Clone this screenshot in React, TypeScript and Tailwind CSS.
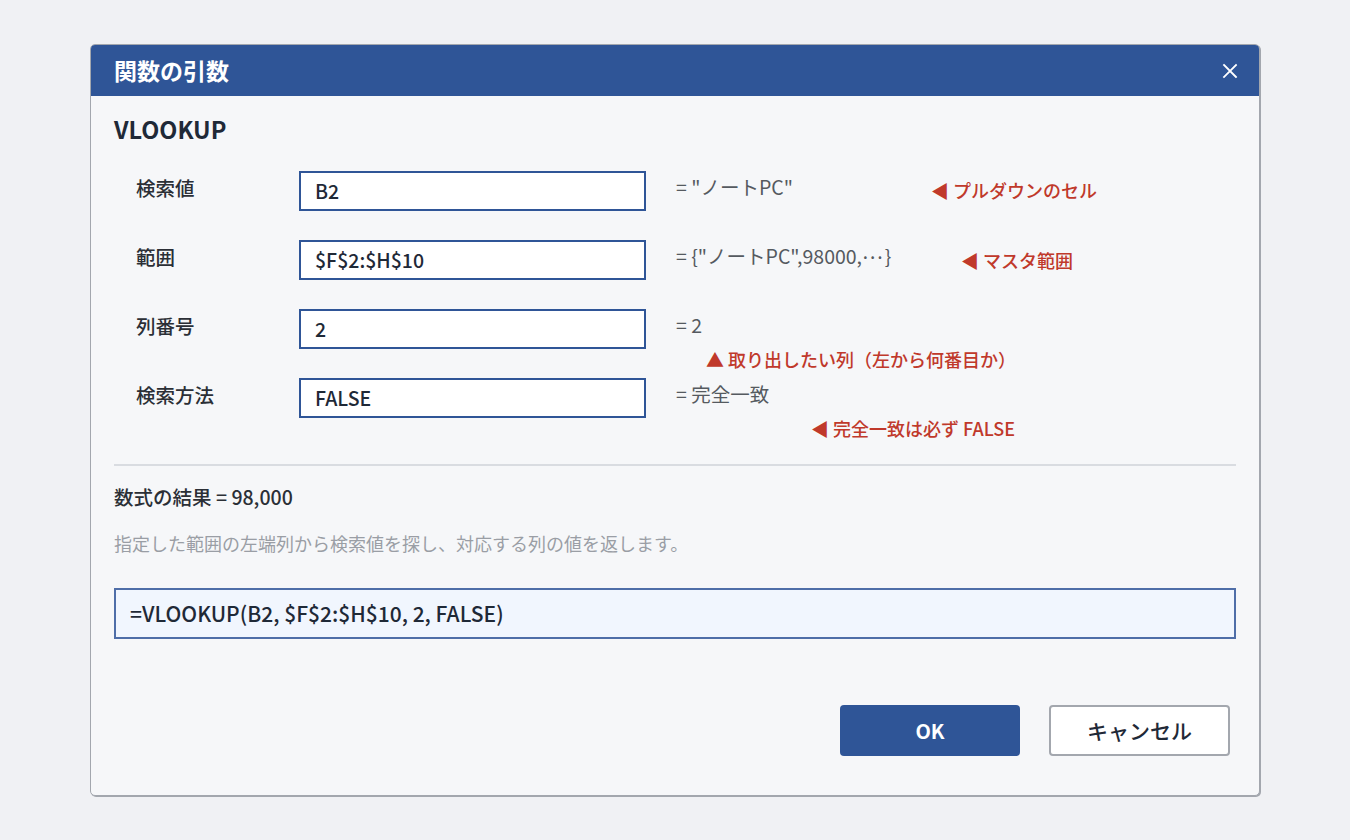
import React from "react";

const font = { fontFamily: '"Noto Sans CJK JP", "Noto Sans", sans-serif' };

type Arg = {
  label: string;
  value: string;
  result: React.ReactNode;
};

const args: Arg[] = [
  { label: "検索値", value: "B2", result: '= "ノートPC"' },
  {
    label: "範囲",
    value: "$F$2:$H$10",
    result: (
      <>
        = {'{"ノートPC",98000,'}
        <span className="relative -top-[5px] mr-[2px]">…</span>
        {"}"}
      </>
    ),
  },
  { label: "列番号", value: "2", result: "= 2" },
  { label: "検索方法", value: "FALSE", result: "= 完全一致" },
];

function Note({ children, up }: { children: React.ReactNode; up?: boolean }) {
  return (
    <span className="whitespace-nowrap text-[18px] font-medium text-[#c0392b]">
      <span>{up ? "▲" : "◀"}</span> {children}
    </span>
  );
}

function CloseIcon() {
  return (
    <svg width="16" height="16" viewBox="0 0 16 16" className="block">
      <path d="M2 2L14 14M14 2L2 14" stroke="white" strokeWidth="1.8" strokeLinecap="square" />
    </svg>
  );
}

export default function App() {
  return (
    <div className="flex h-[840px] w-full items-center justify-center bg-[#f0f1f4]" style={font}>
      <div className="flex h-[752px] w-[1170px] flex-col overflow-hidden rounded-[5px] border border-[#a3a7ae] bg-[#f6f7f9] shadow-[1px_1px_0_#a3a7ae]">
        {/* title bar */}
        <div className="flex h-[51px] shrink-0 items-center justify-between bg-[#2f5597] pl-[23px] pr-[21px]">
          <span className="text-[23px] font-bold text-white">関数の引数</span>
          <CloseIcon />
        </div>

        <div className="flex flex-1 flex-col px-[23px] pt-[18px]">
          <div className="text-[23.5px] font-bold leading-[30px] text-[#1f2937]">VLOOKUP</div>

          {/* argument rows */}
          <div className="mt-[27px] flex flex-col gap-[29px] pl-[22px]">
            {args.map((a, i) => (
              <div key={a.label} className="flex h-[40px] items-start">
                <div className="w-[163px] shrink-0 text-[19.5px] font-medium leading-[34px] text-[#2b2f36]">
                  {a.label}
                </div>
                <div className="flex h-[40px] w-[347px] shrink-0 items-center border-2 border-[#2f5597] bg-white pl-[14px] text-[19.5px] font-medium text-[#1f2937]">
                  {a.value}
                </div>
                <div className="relative ml-[30px] flex items-start">
                  <div
                    className={
                      "whitespace-nowrap text-[19.5px] leading-[32px] text-[#555a60] " +
                      (i === 0 ? "w-[255px]" : i === 1 ? "w-[285px]" : "")
                    }
                  >
                    {a.result}
                  </div>
                  {i === 0 && (
                    <div className="leading-[38px]">
                      <Note>プルダウンのセル</Note>
                    </div>
                  )}
                  {i === 1 && (
                    <div className="leading-[40px]">
                      <Note>マスタ範囲</Note>
                    </div>
                  )}
                  {i === 2 && (
                    <div className="absolute left-[30px] top-[40px] leading-[20px]">
                      <Note up>取り出したい列（左から何番目か）</Note>
                    </div>
                  )}
                  {i === 3 && (
                    <div className="absolute left-[135px] top-[40px] leading-[20px]">
                      <Note>完全一致は必ず FALSE</Note>
                    </div>
                  )}
                </div>
              </div>
            ))}
          </div>

          <div className="mt-[46px] h-[2px] bg-[#d9dce1]" />

          <div className="mt-[18px] text-[19.5px] font-medium leading-[26px] text-[#2b2f36]">
            数式の結果 = 98,000
          </div>
          <div className="mt-[20px] text-[18px] leading-[26px] text-[#9a9ea5]">
            指定した範囲の左端列から検索値を探し、対応する列の値を返します。
          </div>

          <div className="mt-[32px] flex h-[51px] items-center border-2 border-[#4f6ea8] bg-[#f1f6fe] pl-[14px] text-[21px] font-medium text-[#1f2937]">
            =VLOOKUP(B2, $F$2:$H$10, 2, FALSE)
          </div>

          <div className="mt-[66px] flex justify-end gap-[29px] pr-[6px]">
            <button className="flex h-[51px] w-[180px] items-center justify-center rounded-[4px] bg-[#2f5597] text-[20px] font-bold text-white">
              OK
            </button>
            <button className="flex h-[51px] w-[181px] items-center justify-center rounded-[4px] border-2 border-[#a3a7ae] bg-white text-[21px] font-medium text-[#1f2937]">
              キャンセル
            </button>
          </div>
        </div>
      </div>
    </div>
  );
}
